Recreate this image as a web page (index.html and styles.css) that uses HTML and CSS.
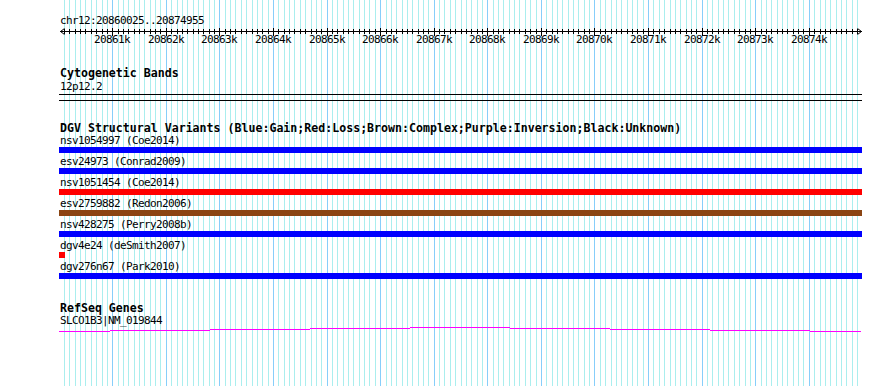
FILE: index.html
```html
<!DOCTYPE html>
<html lang="en">
<head>
    <meta charset="UTF-8">
    <meta name="viewport" content="width=device-width, initial-scale=1.0">
    <title>chr12:20860025..20874955</title>
    <link rel="stylesheet" href="styles.css">
</head>
<body>
    <div class="view">
        <svg class="grid" id="grid" width="890" height="386"></svg>

        <div class="tracks">
            <div class="segment">chr12:20860025..20874955</div>
            <div class="ruler" id="ruler">
                <svg class="scale" id="scale" width="890" height="9">
                    <rect x="60" y="3" width="802" height="1"></rect>
                    <path class="arrow" d="M64.5 0.5 L60.5 3.5 L64.5 6.5"></path>
                    <path class="arrow" d="M857.5 0.5 L861.5 3.5 L857.5 6.5"></path>
                </svg>
            </div>

            <div class="track cyto">
                <h2>Cytogenetic Bands</h2>
                <div class="label">12p12.2</div>
                <div class="band"></div>
            </div>

            <div class="track dgv">
                <h2>DGV Structural Variants (Blue:Gain;Red:Loss;Brown:Complex;Purple:Inversion;Black:Unknown)</h2>
                <div class="row">
                    <div class="label">nsv1054997 (Coe2014)</div>
                    <div class="bar gain"></div>
                </div>
                <div class="row">
                    <div class="label">esv24973 (Conrad2009)</div>
                    <div class="bar gain"></div>
                </div>
                <div class="row">
                    <div class="label">nsv1051454 (Coe2014)</div>
                    <div class="bar loss"></div>
                </div>
                <div class="row">
                    <div class="label">esv2759882 (Redon2006)</div>
                    <div class="bar complex"></div>
                </div>
                <div class="row">
                    <div class="label">nsv428275 (Perry2008b)</div>
                    <div class="bar gain"></div>
                </div>
                <div class="row">
                    <div class="label">dgv4e24 (deSmith2007)</div>
                    <div class="bar loss short"></div>
                </div>
                <div class="row">
                    <div class="label">dgv276n67 (Park2010)</div>
                    <div class="bar gain"></div>
                </div>
            </div>

            <div class="track refseq">
                <h2>RefSeq Genes</h2>
                <div class="label">SLCO1B3|NM_019844</div>
                <svg class="gene" width="803" height="5">
                    <rect x="0" y="4" width="51" height="1"></rect>
                    <rect x="51" y="3" width="100" height="1"></rect>
                    <rect x="151" y="2" width="100" height="1"></rect>
                    <rect x="251" y="1" width="100" height="1"></rect>
                    <rect x="351" y="0" width="100" height="1"></rect>
                    <rect x="451" y="1" width="100" height="1"></rect>
                    <rect x="551" y="2" width="100" height="1"></rect>
                    <rect x="651" y="3" width="100" height="1"></rect>
                    <rect x="751" y="4" width="51" height="1"></rect>
                </svg>
            </div>
        </div>
    </div>

    <script src="script.js"></script>
</body>
</html>
```

FILE: styles.css
```css
body {
    margin: 0;
    background: #fff;
    color: #000;
    font-family: "DejaVu Sans Mono", "Liberation Mono", monospace;
    font-size: 11px;
}
.view {
    position: relative;
    width: 890px;
    height: 386px;
    overflow: hidden;
}
.grid {
    position: absolute;
    left: 0;
    top: 0;
}
.grid .minor {
    fill: #aaeeee;
}
.grid .major {
    fill: #87cefa;
}
.tracks {
    position: relative;
    width: 803px;
    padding-left: 59px;
}
.segment,
.label {
    height: 12px;
    line-height: 12px;
    padding-left: 1px;
    letter-spacing: -0.62px;
    white-space: nowrap;
}
.segment {
    padding-top: 15px;
}
/* ruler spans the whole picture so ticks use page x */
.ruler {
    position: relative;
    width: 890px;
    height: 20px;
    margin: 1px 0 0 -59px;
}
.scale {
    display: block;
}
.scale rect {
    fill: #000;
}
.scale .arrow {
    fill: none;
    stroke: #000;
    stroke-width: 1;
}
.tick-label {
    position: absolute;
    top: 6px;
    line-height: 12px;
    letter-spacing: -0.62px;
    transform: translateX(-50%);
    white-space: nowrap;
}
.track h2 {
    margin: 0;
    height: 12px;
    line-height: 12px;
    padding-left: 1px;
    font-size: 11.6px;
    font-weight: bold;
    white-space: nowrap;
}
.cyto h2 {
    margin-top: 19px;
}
.cyto .label {
    margin-top: 2px;
}
.band {
    height: 5px;
    margin-top: 1px;
    border-top: 1px solid #000;
    border-bottom: 1px solid #000;
}
.dgv h2 {
    margin-top: 21px;
}
.row {
    padding: 1px 0 2px;
}
.bar {
    height: 6px;
}
.bar.gain {
    background: #0000ff;
}
.bar.loss {
    background: #ff0000;
}
.bar.complex {
    background: #8b4513;
}
.bar.short {
    width: 6px;
}
.refseq h2 {
    margin-top: 21px;
}
.refseq .label {
    height: 11px;
    margin-top: 1px;
}
.gene {
    display: block;
    margin-top: 1px;
}
.gene rect {
    fill: #ff00ff;
}
```

FILE: script.js
```js
const START = 20860025;
const END = 20874955;
const SVG_NS = "http://www.w3.org/2000/svg";

function xOf(bp) {
    return Math.round(60 + (bp - START) * 800 / (END - START));
}

function addRect(svg, x, y, w, h, cls) {
    const r = document.createElementNS(SVG_NS, "rect");
    r.setAttribute("x", x);
    r.setAttribute("y", y);
    r.setAttribute("width", w);
    r.setAttribute("height", h);
    if (cls) r.setAttribute("class", cls);
    svg.appendChild(r);
}

const grid = document.getElementById("grid");
const scale = document.getElementById("scale");
const ruler = document.getElementById("ruler");

// one line every 100bp, a heavier one every kb
for (let bp = Math.ceil(START / 100) * 100; bp < END; bp += 100) {
    const x = xOf(bp);
    const major = bp % 1000 === 0;
    addRect(grid, x, 0, 1, 386, major ? "major" : "minor");
    addRect(scale, x, major ? 0 : 1, 1, major ? 8 : 5);
    if (major) {
        const label = document.createElement("span");
        label.className = "tick-label";
        label.textContent = bp / 1000 + "k";
        label.style.left = x + "px";
        ruler.appendChild(label);
    }
}
```
